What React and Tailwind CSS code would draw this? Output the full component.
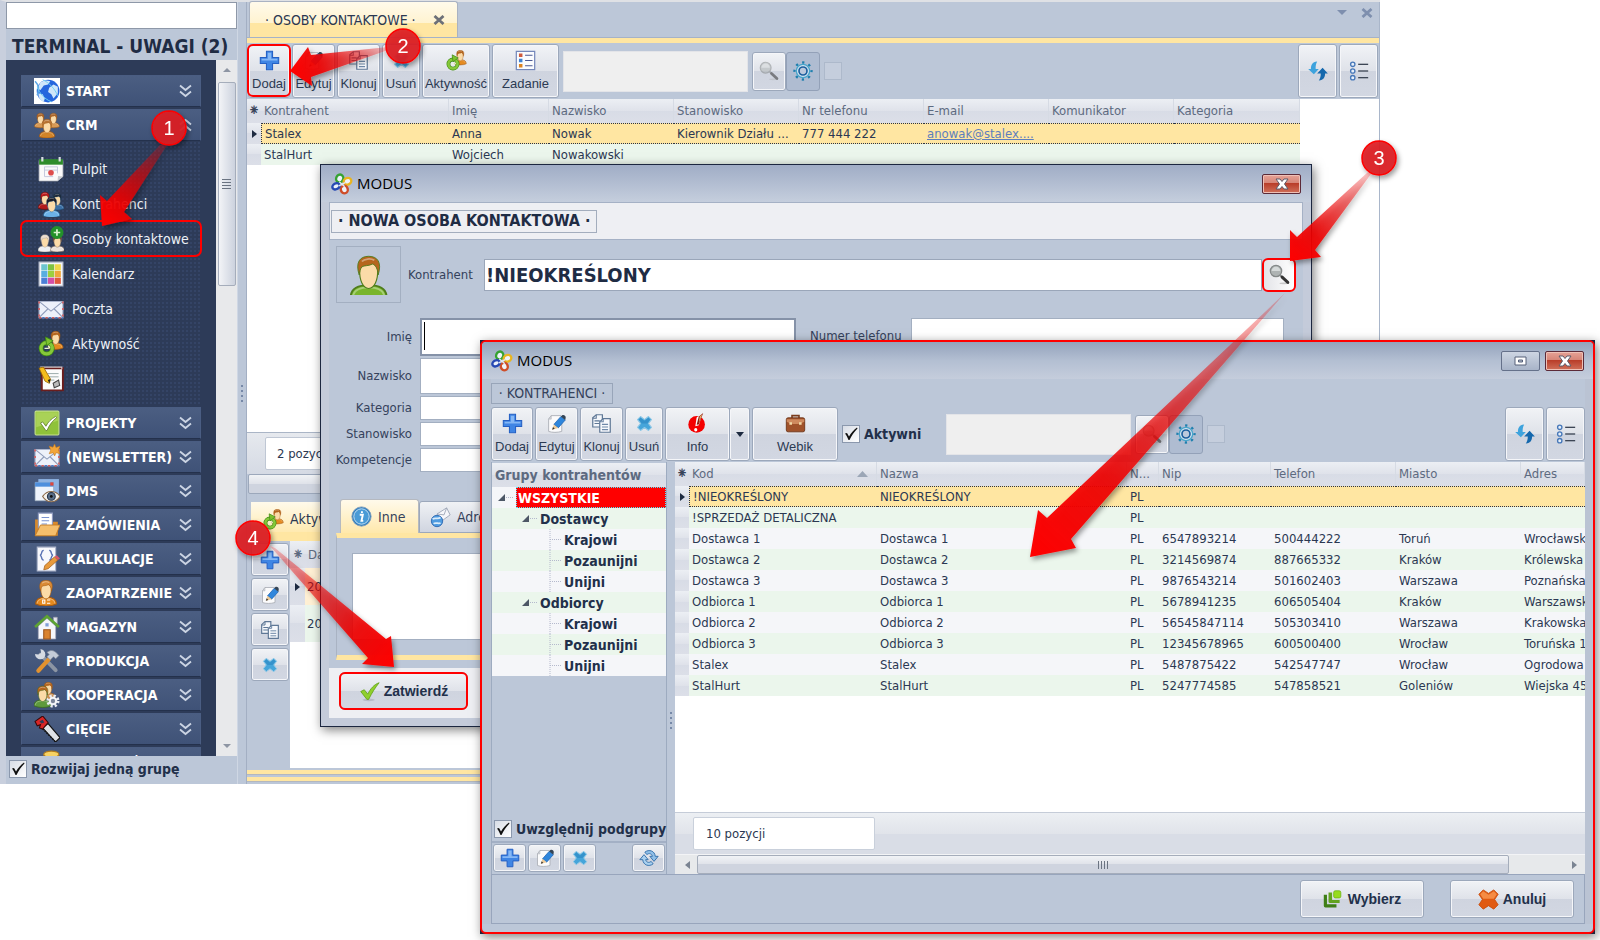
import clsx from 'clsx';

const TAHOMA = "font-['DejaVu_Sans_Condensed','DejaVu_Sans',sans-serif]";
const ARIAL = "font-['Liberation_Sans',Arial,sans-serif]";
const SEGOE = "font-['Open_Sans','Noto_Sans',sans-serif]";

const buttonFace =
    'border border-[#9ca8bb] rounded-[3px] shadow-[inset_0_0_0_1px_#f5f6f9] bg-[linear-gradient(#f1f3f6,#dfe2e9_50%,#cfd4df_50%,#d2d7e2)]';
const headFace = 'bg-[linear-gradient(#eceff4,#dfe2ea_50%,#d8dce6_50%,#dcdfe8)]';

/* ---------- Icons ---------- */

const Svg = ({ size = 20, children, box = '0 0 24 24' }) => (
    <svg width={size} height={size} viewBox={box} fill="none" className="shrink-0" aria-hidden="true">
        {children}
    </svg>
);

const Head = ({ x, y, s = 1, hair = '#b5651d', body = '#e58a1f', edge = '#a65a10' }) => (
    <g transform={`translate(${x} ${y}) scale(${s})`}>
        <path d="M0 18.5C0 14.5 3 13 8 13s8 1.5 8 5.500c-4 2-12 2-16 0Z" fill={body} stroke={edge} strokeWidth="0.8" />
        <path d="M1 18c.5-3 3-4 7-4s6.500 1 7 4" stroke="#fff" strokeOpacity="0.35" strokeWidth="0.8" />
        <path d="M4 6c-.2 5 1.500 8.500 4 8.500S12.200 11 12 6c-1-4-7-4-8 0Z" fill="#fbdba8" stroke={edge} strokeWidth="0.5" />
        <path d="M3.800 8.500C2 3 4 .2 8 .2s6 2.800 4.200 8.300C12 5.500 11 4.200 9.800 3.600 8 4.600 6 4.200 5 4.900 4.200 5.800 4.100 7 3.800 8.500Z" fill={hair} stroke={edge} strokeWidth="0.4" />
        <path d="M5 2.500C6 1.300 9 1 10.500 2" stroke="#fff" strokeOpacity="0.4" strokeWidth="0.8" />
    </g>
);

const PlusIcon = ({ size }) => (
    <Svg size={size}>
        <path d="M8.500 1.500h7v7h7v7h-7v7h-7v-7h-7v-7h7Z" fill="#3f85e4" stroke="#2560c4" strokeWidth="1.2" />
        <path d="M10 3h4v7h7v2H3v-2h7Z" fill="#86b8f5" />
    </Svg>
);

const EditIcon = ({ size }) => (
    <Svg size={size}>
        <path d="M6 3h11l1 1v17c-5 1.500-11 1.500-15 0V7Z" fill="#fbfbfc" stroke="#a9adb5" />
        <path d="M6 3v4H3Z" fill="#d5d8de" stroke="#a9adb5" strokeWidth="0.6" />
        <path d="m9 13 8-9 5 4-8 9Z" fill="#2f86dc" stroke="#1b5fae" strokeWidth="0.8" />
        <path d="m17 4 1.500-1.500c2-1 4.500 1 4 3L22 8Z" fill="#334455" />
        <path d="m9 13-2 6 7-2Z" fill="#eecb98" />
        <path d="m8 16-1 3 3-1Z" fill="#333" />
    </Svg>
);

const CloneIcon = ({ size }) => (
    <Svg size={size}>
        <path d="M2 5.500 6 2h7v14H2Z" fill="#f3f6fa" stroke="#5f7896" strokeWidth="1.4" />
        <path d="M6 2v4H2M4 9h6M4 12h6" stroke="#5f7896" strokeWidth="1.2" />
        <path d="m10 10 4-3.500h8V22H10Z" fill="#f7f9fc" stroke="#5f7896" strokeWidth="1.4" />
        <path d="M14 6.500V10h-4M12.500 13h7M12.500 16h7M12.500 19h7" stroke="#6f89a8" strokeWidth="1.2" />
    </Svg>
);

const DeleteIcon = ({ size }) => (
    <Svg size={size}>
        <path d="m7.500 4 4.500 3.500L16.500 4 20 7.500 16.500 12l3.500 4.500-3.500 3.500-4.500-3.500L7.500 20 4 16.500 7.500 12 4 7.500Z" fill="#45a5da" stroke="#8fc8e6" strokeWidth="1.2" strokeLinejoin="round" />
        <path d="m7.500 5.500 4.500 3.500 4.500-3.500 2 2-3.500 4.500H9L5.500 7.500Z" fill="#2c86c2" opacity="0.6" />
    </Svg>
);

const ActivityIcon = ({ size }) => (
    <Svg size={size}>
        <Head x={9.500} y={0} s={0.85} />
        <circle cx="8" cy="16" r="5.2" stroke="#3f8a14" strokeWidth="4.4" />
        <circle cx="8" cy="16" r="5.2" stroke="#86c83a" strokeWidth="3" />
        <path d="M7 5.500 14 9l-6 4.500Z" fill="#7cc22f" stroke="#3f8a14" strokeWidth="0.8" />
        <path d="M6 16h4M9.500 13.500 11 16" stroke="#eaf7d8" strokeWidth="1.2" />
    </Svg>
);

const TaskIcon = ({ size }) => (
    <Svg size={size}>
        <path d="M1.500 1.500h21v21h-21Z" fill="#fbfcfe" stroke="#7487ba" strokeWidth="1.4" />
        <path d="M4.500 4h4v4h-4Z" fill="#cf5a3c" />
        <path d="M4.500 10h4v4h-4Z" fill="#3f82d2" />
        <path d="M4.500 16h4v4h-4Z" fill="#dd8320" />
        <path d="M11.500 6H20M11.500 12H20M11.500 18H20" stroke="#4c5a94" strokeWidth="1.4" />
    </Svg>
);

const MagnifierIcon = ({ size, dim }) => (
    <Svg size={size}>
        <g opacity={dim ? 0.55 : 1}>
            <ellipse cx="17" cy="22" rx="5" ry="1" fill="#999" opacity="0.5" />
            <path d="m12.500 12.500 3 3" stroke="#8a8e8e" strokeWidth="2.4" />
            <path d="m15 15 6.500 6" stroke="#333" strokeWidth="3.4" strokeLinecap="round" />
            <circle cx="8" cy="8" r="6.5" fill="#aeb3b3" stroke="#858989" strokeWidth="1.4" />
            <path d="M3 8a5 5 0 0 1 10 0Z" fill="#d5d9d9" />
        </g>
    </Svg>
);

const GearIcon = ({ size }) => (
    <Svg size={size}>
        <circle cx="12" cy="12" r="10.2" stroke="#1f7fae" strokeWidth="2.8" strokeDasharray="2.8 5.21" strokeDashoffset="1.4" />
        <circle cx="12" cy="12" r="8" fill="#d5e6f2" stroke="#49a5cb" strokeWidth="1.6" />
        <circle cx="12" cy="12" r="4.8" fill="#bcc9dc" stroke="#1c5f9e" strokeWidth="2" />
    </Svg>
);

const RefreshIcon = ({ size }) => (
    <Svg size={size}>
        <path d="M11 .5C5 1 3.500 5 3.500 9.500H.2L7 16l6-6.500H9.200C9 6 9.500 3 11 .5Z" fill="#3ea3dd" />
        <path d="M13 23.500c6-.5 7.500-4.500 7.500-8.500h3.300L17.500 8 11 15h4.300c.2 3.500-.8 6-2.300 8.500Z" fill="#1568ad" />
    </Svg>
);

const ListIcon = ({ size }) => (
    <Svg size={size}>
        {[4, 12, 20].map((y) => (
            <g key={y}>
                <circle cx="4.5" cy={y} r="2.6" fill="#e6effa" stroke="#4778b9" strokeWidth="1.6" />
                <path d={`M11 ${y}h12`} stroke="#3d4655" strokeWidth="1.6" />
            </g>
        ))}
    </Svg>
);

const SyncIcon = ({ size }) => (
    <Svg size={size}>
        <path d="M7 5c5-4 12-1.500 12.500 5H23l-5 6-5-6h3c-.5-3-4-4.500-6.500-2Z" fill="#8fbfe8" stroke="#2f6ca8" strokeWidth="1.1" />
        <path d="M17 19c-5 4-12 1.500-12.500-5H1l5-6 5 6H8c.5 3 4 4.500 6.500 2Z" fill="#a9d0ef" stroke="#2f6ca8" strokeWidth="1.1" />
    </Svg>
);

const InfoRedIcon = ({ size }) => (
    <Svg size={size}>
        <circle cx="11" cy="13" r="9.5" fill="#f40000" />
        <path d="m11 5 7-5-4.500 14-4 1Z" fill="#fff" />
        <path d="m13.500 4 5-4-5 13-2.500.5Z" fill="#8d1e10" />
        <path d="m14.500 4 3-2.500-4 10Z" fill="#e8b06a" />
        <ellipse cx="10" cy="19" rx="1.8" ry="2" fill="#fff" />
    </Svg>
);

const BriefcaseIcon = ({ size }) => (
    <Svg size={size}>
        <path d="M8 6V3h8v3" stroke="#7a3c1c" strokeWidth="1.8" />
        <rect x="1.5" y="5.5" width="21" height="16" rx="2" fill="#a0522a" stroke="#6d3416" />
        <path d="M2 7h20v3c-6 3.500-14 3.500-20 0Z" fill="#cf8a5e" />
        <path d="M5 10.500h3v3H5ZM16 10.500h3v3h-3Z" fill="#f0d9a8" />
    </Svg>
);

const ModusLogo = ({ size = 22 }) => (
    <Svg size={size}>
        <ellipse cx="9.5" cy="6" rx="3.8" ry="4.4" transform="rotate(25 9.5 6)" fill="#eef3fa" stroke="#36a232" strokeWidth="2.6" />
        <ellipse cx="18" cy="9" rx="4.2" ry="3.6" transform="rotate(-20 18 9)" fill="#eef3fa" stroke="#e9b520" strokeWidth="2.6" />
        <ellipse cx="14.5" cy="18" rx="3.8" ry="4.2" transform="rotate(-15 14.5 18)" fill="#eef3fa" stroke="#cf4d28" strokeWidth="2.6" />
        <ellipse cx="5.5" cy="14.5" rx="4.2" ry="3.2" transform="rotate(-30 5.5 14.5)" fill="#eef3fa" stroke="#2749b3" strokeWidth="2.6" />
        <path d="M9 9.500 15 15M8.500 14l7-3.500" stroke="#dfe7f2" strokeWidth="1.6" />
    </Svg>
);

const ApproveIcon = ({ size }) => (
    <Svg size={size}>
        <ellipse cx="11" cy="21.5" rx="7" ry="1.5" fill="#888899" opacity="0.35" />
        <path d="m2 12 4-2 4 5C13 9 17 4 23 2c-4 5-8 11-12 19H9Z" fill="#8fd02c" stroke="#5e9e14" strokeWidth="0.9" />
    </Svg>
);

const ChooseIcon = ({ size }) => (
    <Svg size={size}>
        <path d="M1 6h4v12h12v4H3a2 2 0 0 1-2-2Z" fill="#3f7f17" />
        <path d="M7 3h4.500v9.500H21v4H9a2 2 0 0 1-2-2Z" fill="#62a31f" />
        <rect x="13.5" y="1" width="9" height="9" rx="2" fill="#97dc1d" stroke="#6fb313" />
    </Svg>
);

const CancelIcon = ({ size }) => (
    <Svg size={size}>
        <path d="m6 1 6 4 6-4 5 5-4 6 4 6-5 5-6-4-6 4-5-5 4-6-4-6Z" fill="#e05a12" stroke="#c94b0a" strokeLinejoin="round" />
        <path d="m6 2.500 6 4 6-4L21.500 6 18 11H6L2.500 6Z" fill="#f58c45" />
    </Svg>
);

const InfoBlueIcon = ({ size }) => (
    <Svg size={size}>
        <circle cx="12" cy="12" r="11" fill="#2f7fc0" stroke="#7d9cba" />
        <circle cx="12" cy="12" r="8.8" fill="#4a9bd6" stroke="#cfe6f6" />
        <path d="M10 10h3.500l-1.500 7h2M12.500 6v2" stroke="#fff" strokeWidth="2.2" />
    </Svg>
);

const AddressIcon = ({ size }) => (
    <Svg size={size}>
        <path d="m8 8 11-7 4 8-11 8Z" fill="#f5f6fa" stroke="#9aa3b5" />
        <path d="m8 8 8 1 3-8" stroke="#9aa3b5" />
        <circle cx="8" cy="16" r="6.5" fill="#4e9be0" stroke="#2c66b0" />
        <path d="M3 14c3-3 5 1 9-2M4 19c3-2 6 1 8-1" stroke="#d9ecfb" strokeWidth="2" />
    </Svg>
);

const GlobeIcon = ({ size }) => (
    <Svg size={size}>
        <path d="M0 0h24v24H0Z" fill="#fff" />
        <circle cx="13" cy="12" r="10.5" fill="#2566dd" />
        <path d="M6 4c3-2 6-2 9-1l-2 3-4 1-3 4-3-1Zm8 5 4-3 4 2v6l-4 5-2-4-3-2ZM4 14l4 1 2 4-1 3c-3-1-5-4-5-8Z" fill="#cfe6fa" />
        <path d="M1 3c4 4 4 8 2 13" stroke="#5fa9e8" strokeWidth="1.5" />
        <path d="M3 8c2 6 6 11 13 14M8 1.500c6 3 11 8 14 15" stroke="#6fd0f2" strokeWidth="0.9" />
    </Svg>
);

const CrowdIcon = ({ size }) => (
    <Svg size={size}>
        <Head x={0.5} y={1} s={0.68} body="#d89a55" hair="#a9652a" />
        <Head x={12.5} y={1} s={0.68} body="#d89a55" hair="#a9652a" />
        <Head x={5} y={6.5} s={0.88} body="#d18428" hair="#b87434" />
    </Svg>
);

const DashboardIcon = ({ size }) => (
    <Svg size={size}>
        <path d="M1 4h22v15l-5 4H1Z" fill="#fafafa" stroke="#b9bcc2" strokeWidth="0.7" />
        <path d="M1 3h22v5H1Z" fill="#2e8c2b" />
        <path d="M4 1v4M20 1v4" stroke="#d9dde2" strokeWidth="2" />
        <path d="M6 10h12M6 13h12M6 19h8M6 10v9M18 10v6" stroke="#c4c8dd" strokeWidth="0.9" />
        <circle cx="12" cy="15.5" r="2.6" fill="#dd4c4c" />
        <path d="m18 23 .5-4.500L23 19Z" fill="#c6cad0" />
    </Svg>
);

const ContractorsIcon = ({ size }) => (
    <Svg size={size}>
        <Head x={0} y={1} s={0.8} hair="#c01c1c" body="#b31b1b" edge="#5a1010" />
        <Head x={11.5} y={2} s={0.78} hair="#1d2838" body="#3a6fa5" edge="#20486f" />
        <Head x={5} y={5.5} s={0.95} hair="#1a1a24" body="#6cb2e8" edge="#235a8a" />
    </Svg>
);

const ContactsIcon = ({ size }) => (
    <Svg size={size}>
        <Head x={0} y={8} s={0.8} hair="#e8d8c8" body="#eceff2" edge="#a8a098" />
        <Head x={11.5} y={8} s={0.8} hair="#6e4630" body="#e9e0d8" edge="#86705e" />
        <circle cx="17.5" cy="6" r="6" fill="#23912a" />
        <path d="M17.500 3v6M14.500 6h6" stroke="#d8f4d0" strokeWidth="1.6" />
    </Svg>
);

const tiles = [
    ['#6cc5cf', '#7fc241', '#f0d848'],
    ['#58aee0', '#9ccf3f', '#f0a63c'],
    ['#4b7fd6', '#d44fa6', '#e0593c'],
];

const CalendarIcon = ({ size }) => (
    <Svg size={size}>
        <path d="M1 1h22v22H1Z" fill="#f4f6fa" stroke="#b6bccb" />
        {tiles.map((row, r) =>
            row.map((fill, c) => <rect key={fill} x={3 + c * 6.2} y={3 + r * 6.2} width="5.7" height="5.7" fill={fill} />)
        )}
    </Svg>
);

const MailIcon = ({ size, star }) => (
    <Svg size={size}>
        <path d="M1 5h22v15H1Z" fill="#edf1fa" stroke="#aab4cc" />
        <path d="m1 5 11 9 11-9M1 20l8-8M23 20l-8-8" stroke="#8f9cba" />
        <path d="M1 20h22M1 5v15M23 5v15" stroke="#d85a5a" strokeWidth="1.4" strokeDasharray="2 4" />
        <path d="M4 20h19" stroke="#4a78c8" strokeWidth="1.4" strokeDasharray="2 4" />
        {star && <path d="m19 0 1.300 3.200L24 2l-1.500 3.500L24 9l-3.500-1L19 11l-1.300-3L14 9l1.500-3.500L14 2l3.500 1Z" fill="#f2a63a" stroke="#c67818" strokeWidth="0.5" />}
    </Svg>
);

const PimIcon = ({ size }) => (
    <Svg size={size}>
        <path d="M3.500 2H23v20.500H3.500Z" fill="#fbfbfb" stroke="#6a1d1d" strokeWidth="1.8" />
        <path d="M2 1h20v2" stroke="#d9c9c9" />
        <path d="M9 7h10M9 10h10M9 13h6" stroke="#99aaaa" strokeWidth="0.9" />
        <path d="m1 2 4-1 6.500 11-1 4-4-2Z" fill="#f5bd1c" stroke="#9a6a08" strokeWidth="0.8" />
        <path d="m10.500 16-1.500-3 2.500-1Z" fill="#222" />
        <path d="M14 16l5-3 1 5-5 2Z" fill="#bbb" stroke="#444" />
    </Svg>
);

const ProjectIcon = ({ size }) => (
    <Svg size={size}>
        <rect x="1" y="1" width="22" height="22" rx="1" fill="#8fc23a" stroke="#c5e08c" />
        <path d="M2 2h20v8L2 16Z" fill="#a9d257" />
        <path d="m6 12 2-1 3 4c2-4 5-7 9-9l1 1c-4 3-7 7-9 12h-1Z" fill="#fff" stroke="#5b7a28" strokeWidth="0.7" />
    </Svg>
);

const DmsIcon = ({ size }) => (
    <Svg size={size}>
        <path d="M4 1h19v14H4Z" fill="#8fb4e4" />
        <path d="M1 4h17v17H1Z" fill="#eef3fb" stroke="#99aabb" strokeWidth="0.6" />
        <path d="M1 4h17v4H1Z" fill="#4e8fdd" />
        <path d="M15 4h3v3h-3Z" fill="#e0483c" />
        <path d="M8 17c4-6 12-6 16 0-4 6.500-12 6.500-16 0Z" fill="#f4f2ee" stroke="#8b6a4a" />
        <circle cx="16" cy="17" r="3.6" fill="#5a6f8a" stroke="#26354a" />
        <circle cx="16" cy="17" r="1.3" fill="#111" />
    </Svg>
);

const FolderIcon = ({ size }) => (
    <Svg size={size}>
        <path d="M1 7h8l2 2h11v13H1Z" fill="#d88a2c" />
        <path d="M4 1h13v14H4Z" fill="#fff" stroke="#8f9bc0" />
        <path d="M7 5h7M7 8h7M7 11h5" stroke="#7a93d0" />
        <path d="M1 22 6 12h18l-4 10Z" fill="#f5bf6c" stroke="#c27a20" strokeWidth="0.8" />
    </Svg>
);

const CalcIcon = ({ size }) => (
    <Svg size={size}>
        <path d="M3 1h17v22H3Z" fill="#f7f8fc" stroke="#aeb6cc" />
        <path d="M9 4c-3 0-1 4-3.500 4.500C8 9 6 13 9 13M14 4c3 0 1 4 3.500 4.500C15 9 17 13 14 13" stroke="#5a73b4" strokeWidth="1.3" />
        <path d="m10 18 9-8 3 3-9 8-4 1Z" fill="#e89a3c" stroke="#a4601a" strokeWidth="0.7" />
        <path d="m19 10 2-1.500 3 3L22 13Z" fill="#d8566a" />
    </Svg>
);

const SupplyIcon = ({ size }) => (
    <Svg size={size}>
        <Head x={1.5} y={0} s={1.2} hair="#d98a35" />
        <path d="M8 18.500h2v3H8ZM12 18.500h3M12 21.500h3" stroke="#fff" />
    </Svg>
);

const HouseIcon = ({ size }) => (
    <Svg size={size}>
        <path d="M18 3h3.500v6H18Z" fill="#e4e6ee" stroke="#9999aa" strokeWidth="0.6" />
        <path d="M4 11 12 4l8 7v12H4Z" fill="#f5f6fa" stroke="#aaaabb" strokeWidth="0.7" />
        <path d="M1 12 12 2l11 10" stroke="#5da332" strokeWidth="2.4" />
        <path d="M9 14.500h6V23H9Z" fill="#d9822e" stroke="#9a541a" />
        <path d="M10.500 8.500h3v3h-3Z" fill="#7f9fd8" />
    </Svg>
);

const ToolsIcon = ({ size }) => (
    <Svg size={size}>
        <path d="M6 6 20 20.500" stroke="#8c95a3" strokeWidth="3.6" strokeLinecap="round" />
        <path d="M1 5.500A5 5 0 0 0 9.500 9 5 5 0 0 0 6 1l.5 3.500L4 6Z" fill="#d5dae2" />
        <path d="m4 21 10-11" stroke="#e2922f" strokeWidth="3.8" strokeLinecap="round" />
        <path d="M12 4c4-3 7-2 11 3l-3 3-2-2-3 3-3-3 2-2Z" fill="#c4ccd8" stroke="#7d8796" strokeWidth="0.6" />
    </Svg>
);

const CoopIcon = ({ size }) => (
    <Svg size={size}>
        <Head x={7} y={0} s={0.78} body="#c99054" />
        <Head x={0} y={3.5} s={1} body="#5e9a3c" edge="#3a6a22" />
        <circle cx="17.5" cy="17.5" r="4.8" stroke="#e8ebf1" strokeWidth="2.6" strokeDasharray="2 1.77" />
        <circle cx="17.5" cy="17.5" r="3" fill="#7c8699" stroke="#f3f5f8" strokeWidth="2" />
    </Svg>
);

const SawIcon = ({ size }) => (
    <Svg size={size}>
        <path d="m8 11 5-4 11 13-4 4Z" fill="#dfe2e6" stroke="#111" />
        <path d="m8 12 12 12" stroke="#111" strokeWidth="1.2" strokeDasharray="1.5 1" />
        <path d="M1 5 8 0l5 6-5 6-3-1 1-3-3 1Z" fill="#d92626" stroke="#3a0808" />
        <path d="m5 5 3-1.500L9.500 6 7 7Z" fill="#2d3b58" />
    </Svg>
);

const CoinsIcon = ({ size }) => (
    <Svg size={size}>
        <ellipse cx="7" cy="12" rx="6.5" ry="3.5" fill="#e5a92c" stroke="#a5701a" />
        <path d="M9 4v14h14V4Z" fill="#dd9c24" />
        <ellipse cx="16" cy="4" rx="7" ry="3" fill="#f7d263" stroke="#b07a1c" />
        <path d="M9 8c3 3 11 3 14 0M9 12c3 3 11 3 14 0" stroke="#a8721a" />
    </Svg>
);

/* ---------- Shared controls ---------- */

const ToolButton = ({ icon: Icon, label, className }) => (
    <button
        type="button"
        className={clsx(
            buttonFace,
            ARIAL,
            'flex h-[54px] shrink-0 flex-col items-center justify-between overflow-hidden whitespace-nowrap pt-[5px] pb-1 text-[13px] leading-[18px] text-[#2c3a52]',
            className
        )}
    >
        <Icon size={21} />
        <span>{label}</span>
    </button>
);

const IconButton = ({ icon: Icon, label, className, size = 20, pressed, dim }) => (
    <button
        type="button"
        aria-label={label}
        className={clsx(
            pressed ? 'rounded-[3px] border border-[#93a1b8] bg-[#afbcd1]' : buttonFace,
            'flex shrink-0 items-center justify-center',
            className
        )}
    >
        <Icon size={size} dim={dim} />
    </button>
);

const Checkbox = ({ id, label }) => (
    <label htmlFor={id} className="flex items-center gap-1 text-sm leading-5 font-bold whitespace-nowrap text-[#22304a]">
        <span className="relative size-[18px] shrink-0">
            <input
                id={id}
                type="checkbox"
                defaultChecked
                className="peer block size-[18px] appearance-none border border-[#8b98ad] bg-linear-to-br from-[#d8dde6] to-white"
            />
            <svg viewBox="0 0 18 18" className="pointer-events-none absolute inset-0 hidden size-[18px] peer-checked:block">
                <path d="M3 8.500 5 8l2 3.500C9 8 11.500 5 15 2.500l.5 1C12 7 9.500 11 7.500 15H6.500C5.500 12.500 4.500 10.500 3 8.500Z" fill="#111" />
            </svg>
        </span>
        {label}
    </label>
);

const SearchGroup = ({ id }) => (
    <div className="flex items-center">
        <input id={id} type="text" aria-label="Szukaj" className="h-[41px] w-[185px] border border-[#e3e4e8] bg-[#efefef] px-2 text-sm" />
        <IconButton icon={MagnifierIcon} label="Wyszukaj" dim className="ml-1 h-[39px] w-[34px]" />
        <IconButton icon={GearIcon} label="Ustawienia wyszukiwania" pressed className="h-[39px] w-[34px]" />
        <input type="checkbox" aria-label="Filtr" className="ml-1 size-[18px] appearance-none border border-[#adb9cb] bg-[#c5cedd]" />
    </div>
);

const DataGrid = ({ columns, rows, sorted }) => (
    <table className="w-full table-fixed border-separate border-spacing-0 text-[13px] leading-5 text-[#2b3852]">
        <colgroup>
            <col className="w-[14px]" />
            {columns.map((c) => (
                <col key={c.name} className={c.width} />
            ))}
        </colgroup>
        <thead>
            <tr className="text-left text-[#5d6a80]">
                <th className={clsx(headFace, 'h-6 p-0 text-center text-base font-normal text-[#38445a]')}>⁕</th>
                {columns.map((c) => (
                    <th key={c.name} className={clsx(headFace, 'h-6 truncate border-r border-[#d6dbe4] p-0 pl-[3px] font-normal')}>
                        {sorted === c.name ? (
                            <span className="flex items-center justify-between pr-2">
                                {c.name}
                                <svg width="11" height="6" viewBox="0 0 11 6"><path d="M0 6h11L5.500 0Z" fill="#9ba6b6" /></svg>
                            </span>
                        ) : (
                            c.name
                        )}
                    </th>
                ))}
            </tr>
        </thead>
        <tbody>
            {rows.map((row, i) => (
                <tr key={row[0]} className={clsx(i === 0 ? 'bg-[#ffe6a2]' : i % 2 ? 'bg-[#ebf6ec]' : 'bg-[#f5f6f9]')}>
                    <td className={clsx(headFace, 'h-[21px] p-0')}>
                        {i === 0 && <svg width="14" height="8" viewBox="0 0 14 8"><path d="M5 0v8l5-4Z" fill="#1d2a40" /></svg>}
                    </td>
                    {columns.map((c, j) => (
                        <td
                            key={c.name}
                            className={clsx(
                                'h-[21px] overflow-hidden p-0 pl-[3px] leading-[19px] whitespace-nowrap',
                                i === 0 && 'border-y border-dotted border-[#2c3448]',
                                i === 0 && j === 0 && 'border-l'
                            )}
                        >
                            {c.link && row[j] ? <a href="#mail" className="text-[#5d7ebd] underline">{row[j]}</a> : row[j]}
                        </td>
                    ))}
                </tr>
            ))}
        </tbody>
    </table>
);

const CloseButton = () => (
    <button type="button" aria-label="Zamknij" className="flex h-5 w-[39px] items-center justify-center rounded-[2px] border border-[#5c2a38] bg-[linear-gradient(#e6a296,#d68577_45%,#b83c28_45%,#d0705a)] shadow-[inset_0_0_0_1px_#eec0b6]">
        <svg width="14" height="12" viewBox="0 0 14 12"><path d="M1 1h4l2 2.500L9 1h4L9.500 6l3.500 5H9L7 8.500 5 11H1l3.500-5Z" fill="#fff" stroke="#5b5b6a" /></svg>
    </button>
);

/* ---------- Sidebar ---------- */

const crmItems = [
    { name: 'Pulpit', icon: DashboardIcon },
    { name: 'Kontrahenci', icon: ContractorsIcon },
    { name: 'Osoby kontaktowe', icon: ContactsIcon, active: true },
    { name: 'Kalendarz', icon: CalendarIcon },
    { name: 'Poczta', icon: MailIcon },
    { name: 'Aktywność', icon: ActivityIcon },
    { name: 'PIM', icon: PimIcon },
];

const groups = [
    { name: 'START', icon: GlobeIcon },
    { name: 'CRM', icon: CrowdIcon, items: crmItems },
    { name: 'PROJEKTY', icon: ProjectIcon },
    { name: '(NEWSLETTER)', icon: (p) => <MailIcon {...p} star /> },
    { name: 'DMS', icon: DmsIcon },
    { name: 'ZAMÓWIENIA', icon: FolderIcon },
    { name: 'KALKULACJE', icon: CalcIcon },
    { name: 'ZAOPATRZENIE', icon: SupplyIcon },
    { name: 'MAGAZYN', icon: HouseIcon },
    { name: 'PRODUKCJA', icon: ToolsIcon },
    { name: 'KOOPERACJA', icon: CoopIcon },
    { name: 'CIĘCIE', icon: SawIcon },
    { name: 'SPRZEDAŻ', icon: CoinsIcon },
];

const Sidebar = () => (
    <aside className="flex w-[231px] shrink-0 flex-col">
        <input type="text" aria-label="Szukaj w menu" className="h-[27px] w-full border border-[#8e98a8] bg-white px-2 text-sm" />
        <h1 className="flex h-[31px] shrink-0 items-center px-1.5 pt-1 text-[19px] font-bold whitespace-nowrap text-[#1f2c44]">TERMINAL - UWAGI (2)</h1>
        <div className="flex min-h-0 flex-1">
            <nav className="flex min-w-0 flex-1 flex-col gap-0.5 overflow-hidden bg-[#2d3b58] px-[15px] pt-[15px]">
                {groups.map(({ name, icon: Icon, items }) => (
                    <div key={name} className="shrink-0">
                        <button type="button" className="flex h-8 w-full items-center border border-[#4a5d82] border-b-[#24314c] bg-linear-to-b from-[#4b5e82] to-[#3f5277] pr-2 pl-3 text-left text-sm font-bold whitespace-nowrap text-white">
                            <Icon size={26} />
                            <span className="flex-1 pl-1.5">{name}</span>
                            <svg width="13" height="14" viewBox="0 0 13 14" className={clsx('shrink-0', items && 'rotate-180')}>
                                <path d="m1 1.500 5.500 4.500L12 1.500M1 7.500 6.500 12 12 7.500" fill="none" stroke="#ccd5e4" strokeWidth="1.8" />
                            </svg>
                        </button>
                        {items && (
                            <ul className="bg-[radial-gradient(#344466_1px,transparent_1px)] bg-[size:4px_4px] pt-2.5 pb-[9px]">
                                {items.map(({ name: item, icon: ItemIcon, active }) => (
                                    <li key={item}>
                                        <a href="#crm" className={clsx('flex h-[35px] items-center gap-2 pl-[17px] text-sm whitespace-nowrap text-[#eef1f6]', active && 'rounded-md outline-2 -outline-offset-1 outline-[#ff0000]')}>
                                            <ItemIcon size={26} />
                                            {item}
                                        </a>
                                    </li>
                                ))}
                            </ul>
                        )}
                    </div>
                ))}
            </nav>
            <div className="flex w-[21px] flex-col items-center bg-[#e8e9eb]">
                <svg width="8" height="22" viewBox="0 0 8 22"><path d="M0 12h8L4 8Z" fill="#8d95a3" /></svg>
                <div className="flex h-[204px] w-[18px] items-center justify-center rounded-[2px] border border-[#a5adbb] bg-linear-to-r from-[#f3f4f7] to-[#ccd2de]">
                    <svg width="9" height="11" viewBox="0 0 9 11"><path d="M0 .5h9M0 3.500h9M0 6.500h9M0 9.500h9" stroke="#6b7482" /></svg>
                </div>
                <svg width="8" height="16" viewBox="0 0 8 16" className="mt-auto"><path d="M0 4h8L4 8Z" fill="#8d95a3" /></svg>
            </div>
        </div>
        <div className="flex h-7 shrink-0 items-center pb-0.5 pl-[3px]">
            <Checkbox id="one-group" label="Rozwijaj jedną grupę" />
        </div>
    </aside>
);

const Dots = () => (
    <div className="flex flex-col gap-[3px]">
        {[0, 1, 2, 3].map((d) => (
            <span key={d} className="size-0.5 bg-[#7789a8]" />
        ))}
    </div>
);

/* ---------- Main window ---------- */

const contactColumns = [
    { name: 'Kontrahent', width: 'w-[188px]' },
    { name: 'Imię', width: 'w-[100px]' },
    { name: 'Nazwisko', width: 'w-[125px]' },
    { name: 'Stanowisko', width: 'w-[125px]' },
    { name: 'Nr telefonu', width: 'w-[125px]' },
    { name: 'E-mail', width: 'w-[125px]', link: true },
    { name: 'Komunikator', width: 'w-[125px]' },
    { name: 'Kategoria', width: '' },
];

const contacts = [
    ['Stalex', 'Anna', 'Nowak', 'Kierownik Działu ...', '777 444 222', 'anowak@stalex....', '', ''],
    ['StalHurt', 'Wojciech', 'Nowakowski', '', '', '', '', ''],
];

const MainWindow = () => (
    <div className="flex min-h-0 flex-1 border-t-2 border-l-6 border-t-[#dfe1e5] border-l-[#c8cfdd] bg-[#bcc7d8]">
        <Sidebar />
        <div className="flex w-2.5 shrink-0 items-center justify-center border-r border-l border-r-[#a3afc3] border-l-[#cfd7e4]">
            <Dots />
        </div>
        <section className="flex min-w-0 flex-1 flex-col border-r border-[#a9b6ca]">
            <div className="flex h-9 shrink-0 items-end justify-between border-b border-[#a5b2c8] pl-0.5">
                <div className="flex h-9 w-[209px] items-center justify-between rounded-t-[3px] border border-b-0 border-[#a9b2c2] bg-[linear-gradient(#fffaeb,#fff3d0_60%,#ffe6a2_60%)] pr-3 pl-[15px] text-sm text-[#2b3852]">
                    <span className="whitespace-nowrap">· OSOBY KONTAKTOWE ·</span>
                    <button type="button" aria-label="Zamknij kartę">
                        <svg width="12" height="10" viewBox="0 0 12 10"><path d="m1.500 1 9 8m0-8-9 8" stroke="#6d7078" strokeWidth="2.8" /></svg>
                    </button>
                </div>
                <div className="flex gap-3.5 self-start pt-1.5 pr-1.5">
                    <svg width="10" height="10" viewBox="0 0 10 10"><path d="M0 2h10L5 7Z" fill="#7e8fae" /></svg>
                    <svg width="12" height="10" viewBox="0 0 12 10"><path d="m1.500 1 9 8m0-8-9 8" stroke="#7e8fae" strokeWidth="2.8" /></svg>
                </div>
            </div>
            <div className="h-[5px] shrink-0 bg-[#ffe6a2]" />
            <div className="flex shrink-0 items-center justify-between px-px pt-px pb-px">
                <div className="flex items-center gap-0.5">
                    <ToolButton icon={PlusIcon} label="Dodaj" className="w-[42px]" />
                    <ToolButton icon={EditIcon} label="Edytuj" className="w-[43px]" />
                    <ToolButton icon={CloneIcon} label="Klonuj" className="w-[43px]" />
                    <ToolButton icon={DeleteIcon} label="Usuń" className="w-[38px]" />
                    <ToolButton icon={ActivityIcon} label="Aktywność" className="w-[68px]" />
                    <ToolButton icon={TaskIcon} label="Zadanie" className="mr-0.5 w-[67px]" />
                    <SearchGroup id="contact-search" />
                </div>
                <div className="flex gap-0.5">
                    <IconButton icon={RefreshIcon} label="Odśwież" className="h-[54px] w-[39px]" />
                    <IconButton icon={ListIcon} label="Widok listy" className="h-[54px] w-[39px]" />
                </div>
            </div>
            <div className="h-[333px] shrink-0 bg-white pr-[79px]">
                <DataGrid columns={contactColumns} rows={contacts} />
            </div>
            <div className="shrink-0 border-t border-[#aab5c6] bg-linear-to-b from-[#e6e9ee] to-[#d5dae4] py-1 pl-[18px]">
                <div className="flex h-[33px] w-[181px] items-center rounded-[2px] border border-[#bfc7d4] bg-white pl-[11px] text-[13px] text-[#2b3852]">2 pozycje</div>
            </div>
            <div className="mx-px h-5 shrink-0 rounded-[2px] border border-[#9ca8bb] bg-[linear-gradient(#f1f3f6,#dfe2e9_50%,#cfd4df_50%)]" />
            <div className="mt-2 flex min-h-0 flex-1 flex-col pl-1">
                <div className="flex h-[30px] shrink-0 items-center gap-1.5 bg-linear-to-b from-[#fffaeb] to-[#ffeab0] pt-1 pl-3 text-sm text-[#2b3852]">
                    <ActivityIcon size={21} />
                    Aktywności
                </div>
                <div className="h-[9px] shrink-0 bg-[#ffe6a2]" />
                <div className="flex min-h-0 flex-1">
                    <div className="flex w-[39px] shrink-0 flex-col gap-0.5 pt-0.5">
                        <IconButton icon={PlusIcon} label="Dodaj aktywność" className="h-[33px] w-[38px]" />
                        <IconButton icon={EditIcon} label="Edytuj aktywność" className="h-[33px] w-[38px]" />
                        <IconButton icon={CloneIcon} label="Klonuj aktywność" className="h-[33px] w-[38px]" />
                        <IconButton icon={DeleteIcon} label="Usuń aktywność" className="h-[33px] w-[38px]" />
                    </div>
                    <div className="min-w-0 flex-1 bg-white text-[13px] text-[#2b3852]">
                        <div className={clsx(headFace, 'flex h-[27px] items-center gap-1 pl-0.5 text-[#5d6a80]')}>
                            <span className="w-3 text-center text-base leading-5">⁕</span>Data
                        </div>
                        <div className="flex h-[37px] items-center bg-[#fff0d4]">
                            <span className={clsx(headFace, 'mr-0.5 flex h-full w-[15px] items-center')}>
                                <svg width="14" height="8" viewBox="0 0 14 8"><path d="M5 0v8l5-4Z" fill="#1d2a40" /></svg>
                            </span>
                            2015
                        </div>
                        <div className="flex h-[37px] items-center bg-[#ebf6ec]">
                            <span className={clsx(headFace, 'mr-0.5 h-full w-[15px]')} />
                            2015
                        </div>
                    </div>
                </div>
            </div>
            <div className="mt-0.5 h-[5px] shrink-0 border-b border-[#b3b7be] bg-[#ffe6a2]" />
            <div className="mt-0.5 mb-0.5 h-[5px] shrink-0 border-b border-[#b3b7be] bg-[#ffe6a2]" />
        </section>
    </div>
);

/* ---------- New contact dialog ---------- */

const fields = [
    { id: 'imie', label: 'Imię', height: 'h-[38px]', focused: true },
    { id: 'nazwisko', label: 'Nazwisko', height: 'h-[36px]' },
    { id: 'kategoria', label: 'Kategoria', height: 'h-6' },
    { id: 'stanowisko', label: 'Stanowisko', height: 'h-6' },
    { id: 'kompetencje', label: 'Kompetencje', height: 'h-6' },
];

const ContactDialog = () => (
    <div role="dialog" aria-label="Nowa osoba kontaktowa" className="absolute top-[164px] right-[288px] left-[320px] border border-[#1c2740] bg-[#c4cbda] px-2 pb-2 shadow-[2px_3px_10px_rgba(0,0,0,0.5)]">
        <div className="-mx-2 flex h-[37px] items-center gap-1 bg-linear-to-b from-[#a0adc6] to-[#c5cedd] px-2.5">
            <ModusLogo />
            <span className={clsx(SEGOE, 'flex-1 text-[15px] text-black')}>MODUS</span>
            <CloseButton />
        </div>
        <div className="border border-[#a5b1c5] bg-[#eeeff3] px-px py-1.5">
            <h2 className="inline-flex h-[23px] items-center border border-[#a3adbd] px-1.5 text-base font-bold whitespace-nowrap text-[#1f2c44]">· NOWA OSOBA KONTAKTOWA ·</h2>
        </div>
        <div className="bg-[#bcc7d8] px-[7px] pt-1.5 pb-2">
            <div className="flex items-center">
                <div className="flex h-[57px] w-[65px] shrink-0 items-center justify-center border border-[#a3afc1]">
                    <Svg size={40}>
                        <Head x={1} y={0.5} s={1.35} body="#79b52c" edge="#4f7d1c" />
                    </Svg>
                </div>
                <label htmlFor="kontrahent" className="w-[83px] shrink-0 pl-[7px] text-[13px] text-[#35425c]">Kontrahent</label>
                <input
                    id="kontrahent"
                    type="text"
                    readOnly
                    defaultValue="!NIEOKREŚLONY"
                    className="h-8 min-w-0 flex-1 border border-[#9aa6b9] bg-white pl-px text-xl font-bold text-[#1f2c44]"
                />
                <button type="button" aria-label="Wybierz kontrahenta" className="flex h-[34px] w-[34px] shrink-0 items-center justify-center rounded-md border-2 border-[#ff0000] bg-linear-to-r from-[#e3e4e8] to-white">
                    <MagnifierIcon size={21} />
                </button>
            </div>
            <div className="mt-[15px] flex gap-x-3.5">
                <div className="flex w-[460px] flex-col gap-0.5">
                    {fields.map((f) => (
                        <div key={f.id} className="flex items-center">
                            <label htmlFor={f.id} className="-ml-2 w-[92px] shrink-0 pr-2 text-right text-[13px] text-[#35425c]">{f.label}</label>
                            <span className="relative flex min-w-0 flex-1">
                                <input id={f.id} type="text" className={clsx(f.height, 'w-full bg-white px-1 text-sm', f.focused ? 'border-2 border-[#8592a8]' : 'border border-[#a3afc1]')} />
                                {f.focused && <span className="absolute top-1 left-1 h-7 w-px bg-black" />}
                            </span>
                        </div>
                    ))}
                </div>
                <div className="flex h-9 min-w-0 flex-1 items-center pr-3">
                    <label htmlFor="telefon" className="w-[101px] shrink-0 text-[13px] text-[#35425c]">Numer telefonu</label>
                    <input id="telefon" type="text" className="h-9 min-w-0 flex-1 border border-[#a3afc1] bg-white px-1 text-sm" />
                </div>
            </div>
            <div className="mt-[27px] flex items-end pl-1 text-sm text-[#35425c]">
                <button type="button" className="flex h-[34px] w-[79px] items-center gap-1.5 rounded-t-[3px] border border-b-0 border-[#b5b9c0] bg-linear-to-b from-[#fffaeb] to-[#ffe8ab] pl-2.5 whitespace-nowrap">
                    <InfoBlueIcon size={21} /> Inne
                </button>
                <button type="button" className="flex h-8 items-center gap-1.5 rounded-t-[3px] border border-[#9ca8bb] bg-linear-to-b from-[#f0f2f5] to-[#d0d5e0] px-2.5 whitespace-nowrap">
                    <AddressIcon size={21} /> Adresy
                </button>
            </div>
            <div className="border border-t-[5px] border-b-[5px] border-[#a9b3c3] border-t-[#ffe6a2] border-b-[#ffe6a2] px-[15px] py-[15px]">
                <textarea aria-label="Inne" className="block h-[87px] w-full resize-none border border-[#a3afc1] bg-white p-1 text-sm" />
            </div>
        </div>
        <div className="bg-[#eeeff3] px-2.5 pt-1 pb-2">
            <button type="button" className={clsx(ARIAL, buttonFace, 'flex h-[38px] w-[129px] items-center justify-center gap-1 rounded-md text-sm font-bold text-[#22304a] outline-2 -outline-offset-2 outline-[#ff0000]')}>
                <ApproveIcon size={21} />
                Zatwierdź
            </button>
        </div>
    </div>
);

/* ---------- Contractors dialog ---------- */

const contractorColumns = [
    { name: 'Kod', width: 'w-[188px]' },
    { name: 'Nazwa', width: 'w-[250px]' },
    { name: 'N...', width: 'w-8' },
    { name: 'Nip', width: 'w-[112px]' },
    { name: 'Telefon', width: 'w-[125px]' },
    { name: 'Miasto', width: 'w-[125px]' },
    { name: 'Adres', width: '' },
];

const contractors = [
    ['!NIEOKREŚLONY', 'NIEOKREŚLONY', 'PL', '', '', '', ''],
    ['!SPRZEDAŻ DETALICZNA', '', 'PL', '', '', '', ''],
    ['Dostawca 1', 'Dostawca 1', 'PL', '6547893214', '500444222', 'Toruń', 'Wrocławska'],
    ['Dostawca 2', 'Dostawca 2', 'PL', '3214569874', '887665332', 'Kraków', 'Królewska'],
    ['Dostawca 3', 'Dostawca 3', 'PL', '9876543214', '501602403', 'Warszawa', 'Poznańska'],
    ['Odbiorca 1', 'Odbiorca 1', 'PL', '5678941235', '606505404', 'Kraków', 'Warszawska'],
    ['Odbiorca 2', 'Odbiorca 2', 'PL', '56545847114', '505303410', 'Warszawa', 'Krakowska'],
    ['Odbiorca 3', 'Odbiorca 3', 'PL', '12345678965', '600500400', 'Wrocław', 'Toruńska 1'],
    ['Stalex', 'Stalex', 'PL', '5487875422', '542547747', 'Wrocław', 'Ogrodowa'],
    ['StalHurt', 'StalHurt', 'PL', '5247774585', '547858521', 'Goleniów', 'Wiejska 45'],
];

const tree = [
    { name: 'WSZYSTKIE', level: 0 },
    { name: 'Dostawcy', level: 1 },
    { name: 'Krajowi', level: 2 },
    { name: 'Pozaunijni', level: 2 },
    { name: 'Unijni', level: 2 },
    { name: 'Odbiorcy', level: 1 },
    { name: 'Krajowi', level: 2 },
    { name: 'Pozaunijni', level: 2 },
    { name: 'Unijni', level: 2 },
];

const treeIndent = ['pl-1.5', 'pl-[30px]', 'pl-[54px]'];

const TreeRow = ({ name, level, odd }) => (
    <li className={clsx('flex h-[21px] items-center', odd ? 'bg-[#ebf6ec]' : 'bg-[#f5f6f9]', treeIndent[level])}>
        <svg width="18" height="21" viewBox="0 0 18 21" className="shrink-0">
            {level < 2 && <path d="M0 14h7V7Z" fill="#4d5766" />}
            <path d={level < 2 ? 'M8 10.500h7' : 'M4 10.500h11M4 0v21'} stroke="#b4b9cc" strokeDasharray="1 1" />
        </svg>
        <span className={clsx('flex h-[21px] flex-1 items-center', level === 0 ? 'border border-dotted border-cyan-300 bg-[#ff0000] pl-px text-white' : 'text-[#22304a]')}>
            {name}
        </span>
    </li>
);

const ContractorsDialog = () => (
    <div className="absolute top-[340px] right-[5px] bottom-[6px] left-[480px] bg-[#1c2740] shadow-[2px_3px_10px_rgba(0,0,0,0.5)]">
        <div role="dialog" aria-label="Kontrahenci" className="flex h-full flex-col rounded-md border-2 border-[#ff0000] bg-[#bcc7d8] pb-2">
            <div className="flex h-[37px] shrink-0 items-center gap-1 rounded-t-sm bg-linear-to-b from-[#94a3bc] via-[#b3bfd2] to-[#c5cddc] px-[9px]">
                <ModusLogo />
                <span className={clsx(SEGOE, 'flex-1 text-[15px] text-black')}>MODUS</span>
                <button type="button" aria-label="Maksymalizuj" className="mr-px flex h-5 w-[39px] items-center justify-center rounded-[2px] border border-[#65718a] bg-linear-to-b from-[#cdd5e2] to-[#a8b4c8]">
                    <svg width="13" height="10" viewBox="0 0 13 10"><path d="M1 1h11v8H1Z" fill="#fff" stroke="#566079" /><path d="M4.500 4h4v2h-4Z" fill="#b4bfd0" stroke="#566079" /></svg>
                </button>
                <CloseButton />
            </div>
            <div className="flex min-h-0 flex-1 flex-col border-r-8 border-l-[9px] border-[#bac3d3]">
                <div className="shrink-0 py-0.5">
                    <h2 className="inline-flex h-[21px] w-[122px] items-center justify-center border border-[#98a5b9] text-sm whitespace-nowrap text-[#35425c]">· KONTRAHENCI ·</h2>
                </div>
                <div className="flex shrink-0 items-center justify-between pb-px">
                    <div className="flex items-center gap-0.5">
                        <ToolButton icon={PlusIcon} label="Dodaj" className="w-[42px]" />
                        <ToolButton icon={EditIcon} label="Edytuj" className="w-[43px]" />
                        <ToolButton icon={CloneIcon} label="Klonuj" className="w-[43px]" />
                        <ToolButton icon={DeleteIcon} label="Usuń" className="w-[38px]" />
                        <div className="flex">
                            <ToolButton icon={InfoRedIcon} label="Info" className="w-[65px]" />
                            <button type="button" aria-label="Więcej" className={clsx(buttonFace, '-ml-px flex h-[54px] w-[21px] items-center justify-center')}>
                                <svg width="8" height="5" viewBox="0 0 8 5"><path d="M0 0h8L4 5Z" fill="#1d2a40" /></svg>
                            </button>
                        </div>
                        <ToolButton icon={BriefcaseIcon} label="Webik" className="w-[86px]" />
                        <div className="flex w-[104px] pl-0.5"><Checkbox id="aktywni" label="Aktywni" /></div>
                        <SearchGroup id="contractor-search" />
                    </div>
                    <div className="flex gap-0.5">
                        <IconButton icon={RefreshIcon} label="Odśwież" className="h-[54px] w-[39px]" />
                        <IconButton icon={ListIcon} label="Widok listy" className="h-[54px] w-[39px]" />
                    </div>
                </div>
                <div className="flex min-h-0 flex-1">
                    <div className="flex w-[176px] shrink-0 flex-col border-x border-[#9dabc0] pt-px">
                        <div className={clsx(headFace, 'flex h-6 shrink-0 items-center pl-[3px] text-sm font-bold whitespace-nowrap text-[#5d6a80]')}>Grupy kontrahentów</div>
                        <ul className="text-sm font-bold">
                            {tree.map((node, i) => (
                                <TreeRow key={i} name={node.name} level={node.level} odd={i % 2 === 1} />
                            ))}
                        </ul>
                        <div className="mt-auto shrink-0 pb-0.5">
                            <div className="mb-0.5 pl-0.5"><Checkbox id="podgrupy" label="Uwzględnij podgrupy" /></div>
                            <div className="flex gap-0.5 border-t-2 border-[#a3b0c5] px-px pt-px">
                                <IconButton icon={PlusIcon} label="Dodaj grupę" className="h-7 w-[33px]" />
                                <IconButton icon={EditIcon} label="Edytuj grupę" className="h-7 w-[33px]" />
                                <IconButton icon={DeleteIcon} label="Usuń grupę" className="h-7 w-[33px]" />
                                <IconButton icon={SyncIcon} label="Odśwież grupy" className="ml-auto h-7 w-[33px]" />
                            </div>
                        </div>
                    </div>
                    <div className="flex w-2 shrink-0 flex-col items-center justify-center pt-[104px]">
                        <Dots />
                    </div>
                    <div className="flex min-w-0 flex-1 flex-col bg-white">
                        <DataGrid columns={contractorColumns} rows={contractors} sorted="Kod" />
                        <div className="mt-auto border-t border-[#c5ccd8] bg-[linear-gradient(#eceff3,#e1e4ea_50%,#d9dde6_50%)] px-[18px] py-1">
                            <div className="flex h-[33px] w-[182px] items-center rounded-[2px] border border-[#c9d0db] bg-white pl-3 text-[13px] text-[#2b3852]">10 pozycji</div>
                        </div>
                        <div className="flex h-5 items-center justify-between border-t border-[#f3f4f6] bg-[#e7e9eb] pr-2 pl-2.5">
                            <svg width="6" height="8" viewBox="0 0 6 8"><path d="M5 0v8L0 4Z" fill="#7b8492" /></svg>
                            <div className="mr-[62px] ml-1.5 flex h-[19px] flex-1 items-center justify-center rounded-[2px] border border-[#a5adbb] bg-[linear-gradient(#f1f3f6,#dfe2e9_50%,#cfd4df_50%)]">
                                <svg width="10" height="8" viewBox="0 0 10 8"><path d="M.5 0v8M3.500 0v8M6.500 0v8M9.500 0v8" stroke="#6b7482" /></svg>
                            </div>
                            <svg width="6" height="8" viewBox="0 0 6 8"><path d="M1 0v8l5-4Z" fill="#7b8492" /></svg>
                        </div>
                    </div>
                </div>
                <div className={clsx(ARIAL, 'flex h-[50px] shrink-0 items-center justify-end gap-[26px] border border-[#98a5bc] pr-2.5 text-sm font-bold text-[#22304a]')}>
                    <button type="button" className={clsx(buttonFace, 'flex h-[38px] w-[124px] items-center justify-center gap-1.5 shadow-[inset_0_0_0_1px_#f3e2ae]')}>
                        <ChooseIcon size={19} />
                        Wybierz
                    </button>
                    <button type="button" className={clsx(buttonFace, 'flex h-[38px] w-[124px] items-center justify-center gap-1')}>
                        <CancelIcon size={21} />
                        Anuluj
                    </button>
                </div>
            </div>
        </div>
    </div>
);

/* ---------- Numbered guide arrows ---------- */

const steps = [
    { n: 1, x: 169, y: 128, tail: [165, 144], tip: [102, 226], points: '160,145 167,145 124,212 132,219 102,226 100,195 107,201' },
    { n: 2, x: 403, y: 46, tail: [388, 48], tip: [290, 71], points: '388,47 388,50 311,77 312,86 290,71 308,47 311,55' },
    { n: 3, x: 1379, y: 158, tail: [1370, 172], tip: [1290, 261], points: '1368,172 1371,174 1315,250 1321,257 1290,261 1290,230 1297,237' },
    { n: 4, x: 253, y: 538, tail: [270, 547], tip: [394, 667], points: '270,546 275,548 386,639 391,636 394,667 362,664 368,658' },
    { tail: [1285, 293], tip: [1030, 557], points: '1285,293 1071,539 1076,548 1030,557 1038,510 1047,518' },
];

const GuideArrows = () => (
    <svg width="1600" height="940" viewBox="0 0 1600 940" className="pointer-events-none absolute top-0 left-0">
        <defs>
            {steps.map((s, i) => (
                <linearGradient key={i} id={`arrow-${i}`} gradientUnits="userSpaceOnUse" x1={s.tail[0]} y1={s.tail[1]} x2={s.tip[0]} y2={s.tip[1]}>
                    <stop offset="0" stopColor="#e80000" stopOpacity="0.2" />
                    <stop offset="0.7" stopColor="#ee0000" stopOpacity="0.9" />
                    <stop offset="1" stopColor="#ff0000" />
                </linearGradient>
            ))}
            <filter id="soft" x="-20%" y="-20%" width="150%" height="150%">
                <feDropShadow dx="2" dy="3" stdDeviation="2.5" floodOpacity="0.4" />
            </filter>
        </defs>
        {steps.map((s, i) => (
            <g key={i} filter="url(#soft)">
                <polygon points={s.points} fill={`url(#arrow-${i})`} />
                {s.n && (
                    <>
                        <circle cx={s.x} cy={s.y} r="17" fill="#dc1f24" fillOpacity="0.92" stroke="#ff0000" strokeWidth="1.5" />
                        <text x={s.x} y={s.y + 7} textAnchor="middle" fill="#fff" className="font-['Liberation_Sans',Arial,sans-serif] text-xl">{s.n}</text>
                    </>
                )}
            </g>
        ))}
    </svg>
);

const App = () => (
    <div className={clsx(TAHOMA, 'relative flex h-screen flex-col overflow-hidden bg-white pr-[220px] pb-[156px]')}>
        <MainWindow />
        <ContactDialog />
        <ContractorsDialog />
        <div className="pointer-events-none absolute top-11 left-[247px] h-[53px] w-11 rounded-md border-2 border-[#ff0000]" />
        <GuideArrows />
    </div>
);

export default App;
